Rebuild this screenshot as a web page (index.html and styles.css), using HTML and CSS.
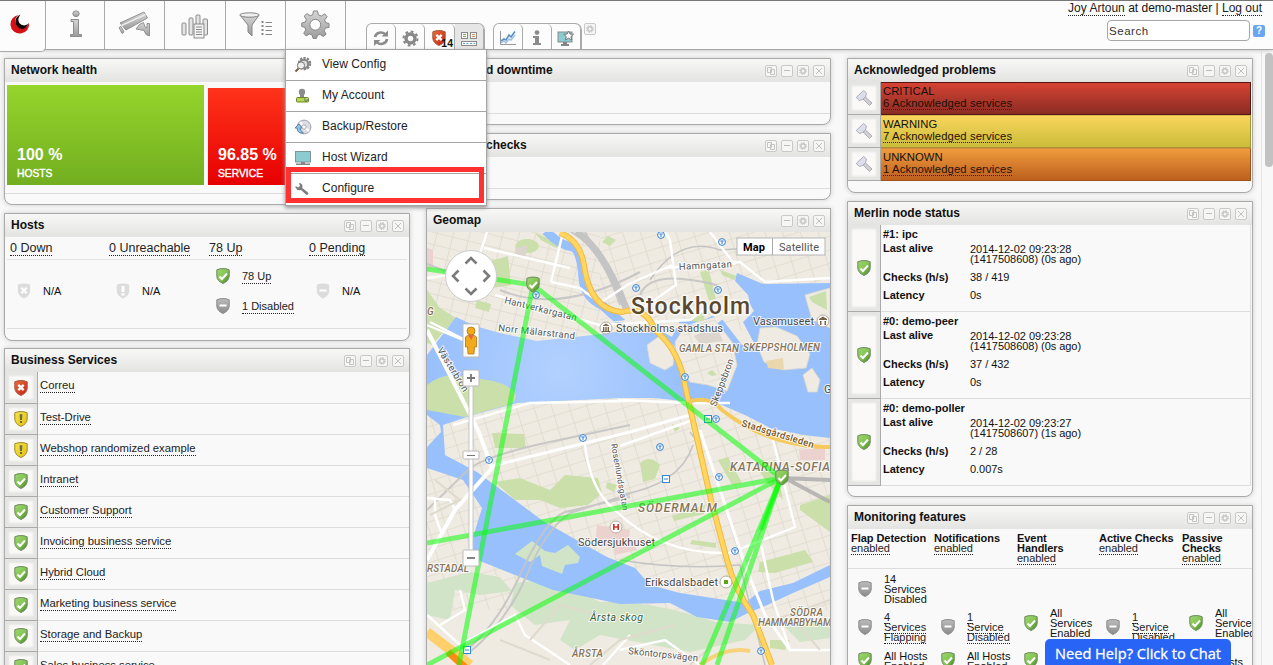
FILE: index.html
```
<!DOCTYPE html>
<html lang="en">
<head>
<meta charset="utf-8">
<title>Tactical overview</title>
<link rel="stylesheet" href="styles.css">
</head>
<body>
<svg class="defs" aria-hidden="true">
  <defs>
    <linearGradient id="gGreen" x1="0" y1="0" x2="1" y2="1"><stop offset="0" stop-color="#9bd670"/><stop offset=".5" stop-color="#86c655"/><stop offset="1" stop-color="#3f7d22"/></linearGradient>
    <linearGradient id="gRed" x1="0" y1="0" x2="1" y2="1"><stop offset="0" stop-color="#e8713d"/><stop offset="1" stop-color="#c81d12"/></linearGradient>
    <linearGradient id="gYellow" x1="0" y1="0" x2="1" y2="1"><stop offset="0" stop-color="#f5e64d"/><stop offset="1" stop-color="#e3bd10"/></linearGradient>
    <linearGradient id="gGrey" x1="0" y1="0" x2="0" y2="1"><stop offset="0" stop-color="#bcbcbc"/><stop offset="1" stop-color="#8a8a8a"/></linearGradient>
    <linearGradient id="gMetal" x1="0" y1="0" x2="0" y2="1"><stop offset="0" stop-color="#d6d6d6"/><stop offset="1" stop-color="#9b9b9b"/></linearGradient>
    <symbol id="check" viewBox="0 0 14 16"><path d="M.8 1.8Q4 .4 7 .6Q10 .4 13.2 1.8V8Q13 13 7 15.5Q1 13 .8 8Z" fill="url(#gGreen)" stroke="#6f8a60"/><path d="M3.5 8.5L6 11L11 5.5" fill="none" stroke="#fff" stroke-width="2"/></symbol>
    <symbol id="crit" viewBox="0 0 14 16"><path d="M.8 1.8Q4 .4 7 .6Q10 .4 13.2 1.8V8Q13 13 7 15.5Q1 13 .8 8Z" fill="url(#gRed)" stroke="#a25a3c"/><path d="M4.3 4.8L9.7 10.2M9.7 4.8L4.3 10.2" stroke="#fff" stroke-width="2.4"/></symbol>
    <symbol id="warn" viewBox="0 0 14 16"><path d="M.8 1.8Q4 .4 7 .6Q10 .4 13.2 1.8V8Q13 13 7 15.5Q1 13 .8 8Z" fill="url(#gYellow)" stroke="#9c8b2c"/><path d="M5.6 3.2H8.4L8 9H6ZM6 10H8V12H6Z" fill="#6f6a4a"/></symbol>
    <symbol id="minus" viewBox="0 0 14 16"><path d="M.8 1.8Q4 .4 7 .6Q10 .4 13.2 1.8V8Q13 13 7 15.5Q1 13 .8 8Z" fill="url(#gGrey)" stroke="#8d8d8d"/><path d="M3.5 7.5H10.5" stroke="#fff" stroke-width="2"/></symbol>
    <symbol id="fx" viewBox="0 0 14 16"><path d="M.8 1.8Q4 .4 7 .6Q10 .4 13.2 1.8V8Q13 13 7 15.5Q1 13 .8 8Z" fill="#dcdcdc"/><path d="M4.3 4.8L9.7 10.2M9.7 4.8L4.3 10.2" stroke="#fff" stroke-width="2.2"/></symbol>
    <symbol id="fw" viewBox="0 0 14 16"><path d="M.8 1.8Q4 .4 7 .6Q10 .4 13.2 1.8V8Q13 13 7 15.5Q1 13 .8 8Z" fill="#dcdcdc"/><path d="M5.5 3H8.5V9H5.5ZM5.5 10.2H8.5V12.4H5.5Z" fill="#fff"/></symbol>
    <symbol id="fm" viewBox="0 0 14 16"><path d="M.8 1.8Q4 .4 7 .6Q10 .4 13.2 1.8V8Q13 13 7 15.5Q1 13 .8 8Z" fill="#dcdcdc"/><path d="M3.5 7.5H10.5" stroke="#fff" stroke-width="2"/></symbol>
    <symbol id="copy" viewBox="0 0 12 12"><rect x=".5" y=".5" width="11" height="11" rx="1.5" fill="#f6f6f5" stroke="#c9c9c9"/><path d="M2.5 2.5H6.5V7.5H2.5ZM5.5 4.5H9.5V9.5H5.5Z" fill="#f6f6f5" stroke="#c4c4c4"/></symbol>
    <symbol id="min" viewBox="0 0 12 12"><rect x=".5" y=".5" width="11" height="11" rx="1.5" fill="#f6f6f5" stroke="#c9c9c9"/><path d="M3 5.5H9" stroke="#bcbcbc"/></symbol>
    <symbol id="cog" viewBox="0 0 12 12"><rect x=".5" y=".5" width="11" height="11" rx="1.5" fill="#f6f6f5" stroke="#c9c9c9"/><circle cx="6" cy="6" r="2.2" fill="none" stroke="#c4c4c4" stroke-width="1.4"/><circle cx="6" cy="6" r="3.5" fill="none" stroke="#c4c4c4" stroke-dasharray="1.3 1.45"/></symbol>
    <symbol id="close" viewBox="0 0 12 12"><rect x=".5" y=".5" width="11" height="11" rx="1.5" fill="#f6f6f5" stroke="#c9c9c9"/><path d="M3 3L9 9M9 3L3 9" stroke="#c0c0c0"/></symbol>
    <symbol id="gear" viewBox="0 0 30 30"><g fill="url(#gMetal)" stroke="#858585"><path d="M13 1H17L18 5L21 6.3L24.6 4L27 7L24.5 10.3L25.5 13L29 14V18L25.2 18.7L24 21.5L26 25L23 27.5L19.7 25.2L17 26.2L16 29.5H12.5L11.5 26L8.7 24.8L5.3 26.8L2.8 24L5 20.6L4 18L.7 17V13.5L4.3 12.5L5.5 9.7L3.3 6.3L6.2 3.7L9.5 6L12 5Z"/><circle cx="14.8" cy="15.3" r="5.6" fill="#fcfcfc"/></g></symbol>
    <symbol id="hammer" viewBox="0 0 18 18"><path d="M8 10L10.500 8L17 14L14.500 16.500Z" fill="#cfcfd4" stroke="#a0a0a8" stroke-width=".8"/><path d="M1.200 8.500L8.500 1.500L11.500 4L10.500 8L7.500 10.500L4.500 11.500Z" fill="#dcdfea" stroke="#a0a0a8" stroke-width=".8"/></symbol>
  </defs>
</svg>

<header class="top">
  <nav class="mainnav">
    <a class="logo"><svg width="20" height="20" viewBox="0 0 20 20"><path d="M9 1A9.3 9.3 0 1 0 19 9A7 7 0 0 1 12 13.5A6.6 6.6 0 0 1 9 1Z" fill="#d51117"/><path d="M10.5.8A7 7 0 0 0 7 12Q13 19.5 19 9A6 6 0 0 1 9.3 9Q7 4.500 10.500.8Z" fill="#120505"/></svg></a>
    <a class="n1"><svg width="14" height="28" viewBox="0 0 14 28"><g fill="url(#gMetal)" stroke="#8b8b8b"><ellipse cx="7" cy="3.700" rx="3.200" ry="2.800"/><path d="M2 9.500H9.500V24.500H12.500V26.500H1.500V24.500H4.500V11.500H2Z"/></g></svg></a>
    <a class="n2"><svg width="34" height="28" viewBox="0 0 34 28"><g fill="url(#gMetal)" stroke="#8b8b8b" stroke-width=".9"><path d="M21.500 14.500L25.500 12.500L27 17L29 18V13.500H31.500V26L28 24.500L26 20.500L18 19Z"/><path d="M2 13L26 2L29.500 8L8 20Z"/><path d="M3.500 15.500L27.500 4.500" stroke="#ececec" stroke-width="1.400"/><path d="M1 17.500L3 16.500L6 22L4 23.500Z"/></g></svg></a>
    <a class="n3"><svg width="28" height="26" viewBox="0 0 28 26"><g fill="#e4e4e4" stroke="#8b8b8b"><rect x="1" y="10" width="4" height="12" rx="1"/><rect x="8" y="5" width="4" height="17" rx="1"/><rect x="15" y="2" width="4" height="20" rx="1"/><rect x="22" y="6" width="4.500" height="16" rx="1"/><rect x="13" y="11" width="10" height="14" fill="#f2f2f2"/><path d="M15 14H21M15 16.500H21M15 19H21M15 21.500H21"/></g></svg></a>
    <a class="n4"><svg width="34" height="26" viewBox="0 0 34 26"><path d="M1 3Q11 7 20 3L13 13V24L9 20V13Z" fill="url(#gMetal)" stroke="#858585"/><ellipse cx="10.500" cy="3" rx="9.700" ry="2.200" fill="#eee" stroke="#858585"/><g stroke="#888"><path d="M26.500 10.500H33M26.500 14.500H33M26.500 18.500H33M26.500 22.500H33"/><path d="M23.500 9V24" stroke-dasharray="2 2" stroke-width="2"/></g></svg></a>
    <a class="n5"><svg width="29" height="29"><use href="#gear"/></svg></a>
  </nav>
  <div class="tabs">
    <a><svg width="18" height="18" viewBox="0 0 18 18"><g fill="none" stroke="#8c8c8c" stroke-width="2.600"><path d="M3 8A6 5.500 0 0 1 13 5"/><path d="M15 10A6 5.500 0 0 1 5 13.500"/></g><path d="M9.500 7.500H16V1.500ZM8.500 11H2V17Z" fill="#8c8c8c"/></svg></a>
    <a><svg width="17" height="17" viewBox="0 0 18 18"><circle cx="9" cy="9" r="4.700" fill="none" stroke="#888" stroke-width="3.600"/><circle cx="9" cy="9" r="7.400" fill="none" stroke="#888" stroke-width="2.200" stroke-dasharray="2.900 2.910"/></svg></a>
    <a class="alerts"><svg width="14" height="16"><use href="#crit"/></svg><b>14</b></a>
    <a class="sel"><svg width="17" height="17" viewBox="0 0 17 17"><g fill="#f8f8f8" stroke="#8a8a8a"><rect x=".5" y="2.500" width="6" height="6"/><rect x="9.500" y="2.500" width="6" height="6"/><rect x=".5" y="11.500" width="15" height="4"/></g><path d="M2 4.500H5M2 6.500H5" stroke="#83a957"/><path d="M11 4.500H14M11 6.500H14" stroke="#c9954d"/><path d="M2 13.500H14" stroke="#68a3c4" stroke-dasharray="2 1.500"/></svg></a>
  </div>
  <div class="tabs second">
    <a><svg width="18" height="16" viewBox="0 0 18 16"><path d="M1.500 1V14.500H17" fill="none" stroke="#999"/><path d="M2 11L5 9L7 10L10 5L12 7L16 1.500" fill="none" stroke="#5a8fc4" stroke-width="1.600"/><path d="M2 13L5 11L7 13L10 9L12 10L16 5" fill="none" stroke="#9cc1e4" stroke-width="1.400"/></svg></a>
    <a><svg width="10" height="16" viewBox="0 0 10 16"><circle cx="5" cy="2.600" r="2.400" fill="#8b8b8b"/><path d="M1 6H7V13H9V15H1V13H3V8H1Z" fill="#8b8b8b"/></svg></a>
    <a><svg width="18" height="17" viewBox="0 0 18 17"><rect x="1" y="2" width="14" height="10" fill="#8ccdd2" stroke="#8b8b8b"/><path d="M6 12H10V14H12V16H4V14H6Z" fill="#858585"/><path d="M11.500 1L13 4L16.500 4.300L14 6.500L14.700 10L11.500 8.200L8.500 10L9.200 6.500L6.700 4.300L10.200 4Z" fill="#fafafa" stroke="#777"/></svg></a>
  </div>
  <svg class="tabcog" width="12" height="12"><use href="#cog"/></svg>
  <div class="user">
    <p><a class="lnk">Joy Artoun</a> at demo-master | <a class="lnk">Log out</a></p>
    <div class="searchrow"><span class="search">Search</span><span class="help">?</span></div>
  </div>
  <div class="menu">
    <a><svg width="18" height="16" viewBox="0 0 18 16"><circle cx="10.500" cy="6.500" r="5.500" fill="none" stroke="#858585" stroke-width="2.400" stroke-dasharray="2.300 1.150"/><circle cx="10" cy="7" r="4.200" fill="#ddd" stroke="#858585" stroke-width="2"/><circle cx="7" cy="8.500" r="3.600" fill="#eee" stroke="#777"/><path d="M4.500 11.500L1.500 14.500" stroke="#8a5843" stroke-width="2"/></svg>View Config</a>
    <a><svg width="16" height="16" viewBox="0 0 16 16"><circle cx="8" cy="4" r="3.200" fill="#8c8c8c"/><path d="M6 6H10V9H6ZM3 9H13V12H3Z" fill="#8c8c8c"/><rect x="2.500" y="9.500" width="12" height="4.500" rx="1" fill="#b5d84f" stroke="#6d8433"/><path d="M11 10V13H13V11" fill="#fff" stroke="#54703a"/></svg>My Account</a>
    <a><svg width="18" height="16" viewBox="0 0 18 16"><circle cx="10" cy="8" r="6.900" fill="#dcdce8" stroke="#a2a2ab"/><path d="M10 8L6 3M10 8L15 12" stroke="#fff" stroke-width="2"/><circle cx="10" cy="8" r="2.200" fill="#fff" stroke="#aaa"/><path d="M1 9L5 5L8 9H6Q6 12 9.500 14Q3 14.500 3.200 9Z" fill="#8fc5e8" stroke="#5787aa"/></svg>Backup/Restore</a>
    <a><svg width="18" height="16" viewBox="0 0 18 16"><rect x="1.500" y="1.500" width="15" height="10.500" fill="#8ccbd0" stroke="#7d9898"/><path d="M7 12H11V13.500H16V15H2V13.500H7Z" fill="#858585"/></svg>Host Wizard</a>
    <a><svg width="16" height="16" viewBox="0 0 16 16"><path d="M5 2Q8 2 8.500 5L8.300 7L14 11.500Q15 13.500 12.500 14L7 9Q3 10 1.500 6.500V5L4 6.500L6 5Z" fill="#7d7d7d"/></svg>Configure</a>
    <span class="frame"></span>
  </div>
</header>

<main class="board">
  <div class="col">
    <section class="w health">
      <h2>Network health</h2>
      <div class="tiles"><div class="tile ok"><b>100 %</b><span>HOSTS</span></div><div class="tile bad"><b>96.85 %</b><span>SERVICE</span></div></div>
    </section>
    <section class="w hosts">
      <h2>Hosts<i><svg><use href="#copy"/></svg><svg><use href="#min"/></svg><svg><use href="#cog"/></svg><svg><use href="#close"/></svg></i></h2>
      <div class="hh"><span><a class="lnk">0 Down</a></span><span><a class="lnk">0 Unreachable</a></span><span><a class="lnk">78 Up</a></span><span><a class="lnk">0 Pending</a></span></div>
      <div class="hb">
        <div><p><svg class="sh"><use href="#fx"/></svg>N/A</p></div>
        <div><p><svg class="sh"><use href="#fw"/></svg>N/A</p></div>
        <div><p><svg class="sh"><use href="#check"/></svg><a class="lnk">78 Up</a></p><p><svg class="sh"><use href="#minus"/></svg><a class="lnk">1 Disabled</a></p></div>
        <div><p><svg class="sh"><use href="#fm"/></svg>N/A</p></div>
      </div>
    </section>
    <section class="w biz">
      <h2>Business Services<i><svg><use href="#copy"/></svg><svg><use href="#min"/></svg><svg><use href="#cog"/></svg><svg><use href="#close"/></svg></i></h2>
      <div class="rows">
        <div><em><svg class="sh"><use href="#crit"/></svg></em><a class="lnk">Correu</a></div>
        <div><em><svg class="sh"><use href="#warn"/></svg></em><a class="lnk">Test-Drive</a></div>
        <div><em><svg class="sh"><use href="#warn"/></svg></em><a class="lnk">Webshop randomized example</a></div>
        <div><em><svg class="sh"><use href="#check"/></svg></em><a class="lnk">Intranet</a></div>
        <div><em><svg class="sh"><use href="#check"/></svg></em><a class="lnk">Customer Support</a></div>
        <div><em><svg class="sh"><use href="#check"/></svg></em><a class="lnk">Invoicing business service</a></div>
        <div><em><svg class="sh"><use href="#check"/></svg></em><a class="lnk">Hybrid Cloud</a></div>
        <div><em><svg class="sh"><use href="#check"/></svg></em><a class="lnk">Marketing business service</a></div>
        <div><em><svg class="sh"><use href="#check"/></svg></em><a class="lnk">Storage and Backup</a></div>
        <div><em><svg class="sh"><use href="#check"/></svg></em><a class="lnk">Sales business service</a></div>
      </div>
    </section>
  </div>

  <div class="col">
    <section class="w small one"><h2><span>d downtime</span><i><svg><use href="#copy"/></svg><svg><use href="#min"/></svg><svg><use href="#cog"/></svg><svg><use href="#close"/></svg></i></h2><div class="blank"></div></section>
    <section class="w small two"><h2><span>checks</span><i><svg><use href="#copy"/></svg><svg><use href="#min"/></svg><svg><use href="#cog"/></svg><svg><use href="#close"/></svg></i></h2><div class="blank"></div></section>
    <section class="w geo">
      <h2>Geomap<i><svg><use href="#min"/></svg><svg><use href="#cog"/></svg><svg><use href="#close"/></svg></i></h2>
      <svg class="map" width="403" height="433" viewBox="427 232 403 433">
        <defs>
          <pattern id="st" width="17" height="13" patternUnits="userSpaceOnUse" patternTransform="rotate(-17)"><path d="M0 0H17M0 0V13" fill="none" stroke="#dfdacd" stroke-width="1.600"/></pattern>
          <pattern id="st2" width="16" height="12" patternUnits="userSpaceOnUse" patternTransform="rotate(14)"><path d="M0 0H16M0 0V12" fill="none" stroke="#dfdacd" stroke-width="1.600"/></pattern>
          <radialGradient id="sea" gradientUnits="userSpaceOnUse" cx="560" cy="370" r="130"><stop offset="0" stop-color="#b3d1ff"/><stop offset="1" stop-color="#98c0fd"/></radialGradient>
          <symbol id="tb" viewBox="0 0 8 8"><circle cx="4" cy="4" r="3.400" fill="#fff" stroke="#2f7fd0"/><path d="M2.300 3H5.700M4 3V6" stroke="#2f7fd0"/></symbol>
        </defs>
        <rect x="427" y="232" width="403" height="433" fill="#efebe2"/>
        <path d="M427 232H600V345H427Z" fill="url(#st2)"/>
        <path d="M600 232H830V330H600ZM427 398H830V610H427Z" fill="url(#st)"/>
        <g fill="#cadfaa">
          <path d="M427 290L440 308L456 318L432 345L427 343ZM487 262L508 256L511 285L492 288ZM515 247q2-9 14-8q12 2 9 10q-10 9-23-2ZM477 300L491 304L489 312L475 308ZM535 233L562 244L556 248L541 240ZM608 236L616 240L610 246L602 242ZM700 272L709 270L716 300L710 304ZM720 270L737 276L734 280L722 275ZM690 318L703 311L705 321L692 325Z"/>
          <path d="M492 433L524 434L526 448L495 448ZM495 482L520 478L550 490L565 475L598 478L602 493L588 505L560 508L540 500L515 500ZM607 482L617 485L614 492L606 488ZM548 314l-8 36M640 463q10-9 20 2l-5 14l-12 3ZM672 516L705 505L704 514L674 521ZM692 540L716 543L716 548L690 544ZM718 460L728 457L742 483L732 485ZM756 465L775 460L783 500L765 480ZM800 505L830 495V532L800 510ZM760 562L805 550L813 562L775 573L758 572ZM672 424L680 428L675 432ZM770 640L790 640L785 650L770 648Z"/>
          <path d="M516 583Q550 575 600 602Q650 600 715 622L760 625L745 640L690 652L600 635L575 650L560 640L570 620L535 625L510 605ZM427 583L470 572L500 577L512 591L480 595L455 590L450 620L427 615ZM785 627L830 620V638L800 642Z" fill="#d1e4c7"/>
        </g>
        <path d="M516 248l12-3l-3 13l-10-1Z" fill="#dbd5ce"/>
        <path d="M427 248L433 250V267L427 269ZM597 525L630 530L628 548L595 545ZM610 530L630 540L637 550L615 555ZM799 450L825 447V460H800Z" fill="#ebd2cf"/>
        <g fill="url(#sea)">
          <path d="M456 317L475 326L500 333L537 341L575 337L610 333L650 325L672 337L680 320L700 322L712 316L722 319L742 345L755 345L743 322L752 313L748 295L735 281L737 273L763 284L830 283V438L803 435L770 428L747 416L722 405L690 402L655 398L620 398L580 400L517 403L473 415L443 425L445 455L477 472L500 489L543 521L580 542L607 557L635 568L650 585L680 593L745 603L760 591L793 583L830 565V577L793 593L763 607L750 612L730 622L697 617L670 603L620 604L587 597L553 590L520 577L480 561L470 547L482 508L463 480L427 468V447L441 432L440 425L427 415V355Z"/>
        </g>
        <path d="M546 231Q560 246 573 247Q581 250 583 278Q584 297 603 306L622 323" fill="none" stroke="#98c0fd" stroke-width="9"/>
        <path d="M606 322L650 318L670 330L715 317L702 301L745 296L754 311L743 321L733 312L712 327L678 323Z" fill="#efebe2"/>
        <g fill="#efebe2" stroke="#ddd8ca" stroke-width=".8">
          <path d="M684 328L715 320L732 342L737 365L727 391L708 385L690 382L677 361L675 342Z"/><path d="M647 345L661 335L675 347L673 365L665 370L650 363Z"/><path d="M760 328L776 327L797 336L810 354L806 368L783 370L764 362L757 345Z"/><path d="M805 295L830 288V328L812 320Z"/><path d="M803 375L812 368L820 380L817 392L808 392Z"/>
        </g>
        <path d="M685 331L729 344L734 365L722 385L692 379L678 358Z" fill="url(#st)"/>
        <path d="M694 336L716 325L723 341L700 344Z" fill="#dbd5ce"/>
        <path d="M766 361L783 358L784 370L768 368Z" fill="#ead7ae"/>
        <path d="M809 297L826 291L827 310L812 302ZM707 373l5-3l5 5l-5 1Z" fill="#cadfaa"/>
        <path d="M427 385Q445 370 470 378Q505 380 515 393Q520 403 500 407L465 417L427 410Z" fill="#cadfaa"/>
        <path d="M515 554L532 541L545 551L555 553L568 545L580 557L578 563L565 565L562 574L542 566L540 555L530 562Z" fill="#d1e4c7"/>
        <!-- railways -->
        <g fill="none" stroke="#c4c4c4" stroke-width="2"><path d="M427 264Q455 275 475 281M500 290Q560 315 640 272M571 232Q600 245 620 305M585 232L630 310M640 295Q650 268 717 285M427 510L470 468Q490 455 545 443L630 425M460 655Q495 630 520 575Q545 520 565 512L630 497M466 655Q505 625 527 575Q545 530 570 513L630 494" opacity=".9"/><path d="M576 232Q603 248 626 308" stroke-width="7"/><path d="M650 280Q680 235 720 250L750 248M620 495Q680 485 693 445M620 560Q680 570 740 565L765 665M690 432L700 445" stroke-width="1.500"/><path d="M781 478L830 480M781 476L830 502" stroke="#aaa" stroke-width="4" opacity=".8"/></g>
        <!-- minor streets -->
        <g fill="none" stroke="#fff" stroke-width="2.400">
          <path d="M427 278L450 275M487 232L478 260M495 295L600 325L690 320M484 248L570 268M551 282L580 288L600 303L627 285L672 265M563 232L551 282M427 325L475 345L430 322M640 310L676 285L670 240L665 232M665 268L740 262L765 282L830 278M710 232L735 265M690 320L710 305"/>
          <path d="M427 330L478 430L492 468L455 510L427 560" stroke-width="4"/><path d="M492 466L630 432L690 415" stroke-width="3"/><path d="M585 445Q590 490 615 510Q660 555 730 553L795 527L773 440"/><path d="M427 498L450 500L455 510M435 500L435 515L442 535M460 590L465 610L440 625M427 615L460 645L515 615L525 635L570 665M603 665L630 635M760 540L773 600L790 650H830M620 650L665 640L700 665"/>
          <path d="M700 430L745 565L765 615L790 650" stroke-width="3"/><path d="M618 400L690 403L730 403M453 425L530 403L625 401M620 446L690 421"/>
        </g>
        <g fill="none" stroke="#dfdacd" stroke-width="2"><path d="M530 640L560 605L620 620M590 665L620 640L675 625M690 665L730 630M500 640L550 660M760 625L830 600M790 615L820 650M435 480L460 500L430 515"/></g>
        <!-- motorways -->
        <path d="M560 233Q580 240 584 265Q590 310 622 312Q645 305 655 330Q680 350 686 390L694 425L711 500L727 560Q735 590 753 615L772 665" fill="none" stroke="#f3b73f" stroke-width="6"/>
        <path d="M560 233Q580 240 584 265Q590 310 622 312Q645 305 655 330Q680 350 686 390L694 425L711 500L727 560Q735 590 753 615L772 665" fill="none" stroke="#ffd65f" stroke-width="4"/>
        <path d="M688 402Q710 395 722 410Q750 432 780 440T830 447" fill="none" stroke="#f5c95b" stroke-width="4"/>
        <path d="M427 632L470 665" stroke="#ffcf6c" stroke-width="10"/><path d="M448 652L468 670" stroke="#ff8b12" stroke-width="7"/>
        <path d="M700 665Q725 646 750 651" fill="none" stroke="#f9d27d" stroke-width="4"/>
        <!-- place labels -->
        <g class="lb">
          <text x="679" y="270" textLength="53" transform="rotate(-3 679 270)">Hamngatan</text>
          <text x="504" y="303" textLength="74" transform="rotate(14 504 303)">Hantverkargatan</text>
          <text x="498" y="331" textLength="77" transform="rotate(6 498 331)">Norr Mälarstrand</text>
          <text x="437" y="350" textLength="50" transform="rotate(58 437 350)">Västerbron</text>
          <text x="716" y="407" textLength="50" transform="rotate(-69 716 407)">Skeppsbron</text>
          <text x="611" y="444" textLength="68" transform="rotate(80 611 444)" class="sm">Rosenlundsgatan</text>
          <text x="741" y="426" textLength="75" transform="rotate(17 741 426)" class="br">Stadsgårdsleden</text>
          <text x="628" y="654" textLength="70" transform="rotate(6 628 654)">Sköntorpsvägen</text>
          <text x="616" y="332" textLength="107" class="poi">Stockholms stadshus</text>
          <text x="753" y="325" textLength="61" class="poi">Vasamuseet</text>
          <text x="578" y="546" textLength="77" class="poi">Södersjukhuset</text>
          <text x="645" y="586" textLength="73" class="poi">Eriksdalsbadet</text>
          <text x="824" y="393" class="poi">G</text>
          <text x="631" y="314" textLength="119" class="city">Stockholm</text>
          <g class="area"><text x="679" y="352" textLength="60">GAMLA STAN</text><text x="743" y="351" textLength="77">SKEPPSHOLMEN</text><text x="730" y="471" textLength="100" class="big">KATARINA-SOFIA</text><text x="638" y="512" textLength="79" class="big">SÖDERMALM</text><text x="427" y="572" textLength="42">RSTADAL</text><text x="572" y="657" textLength="31">ÅRSTA</text><text x="790" y="616" textLength="33">SÖDRA</text><text x="758" y="626" textLength="80">HAMMARBYHAMN</text><text x="427" y="315">G</text></g>
          <text x="590" y="621" textLength="53" class="park">Årsta skog</text>
        </g>
        <g><use href="#tb" x="657" y="231" width="8" height="8"/><use href="#tb" x="718" y="238" width="8" height="8"/><use href="#tb" x="632" y="284" width="8" height="8"/><use href="#tb" x="714" y="286" width="8" height="8"/><use href="#tb" x="532" y="291" width="8" height="8"/><use href="#tb" x="681" y="373" width="8" height="8"/><use href="#tb" x="712" y="415" width="8" height="8"/><use href="#tb" x="485" y="456" width="8" height="8"/><use href="#tb" x="579" y="434" width="8" height="8"/><use href="#tb" x="656" y="443" width="8" height="8"/><use href="#tb" x="715" y="473" width="8" height="8"/><use href="#tb" x="731" y="547" width="8" height="8"/><use href="#tb" x="757" y="647" width="8" height="8"/></g>
        <g fill="#fff" stroke="#3487d2"><rect x="704.500" y="415.500" width="7" height="7"/><rect x="662.500" y="475.500" width="7" height="7"/><rect x="463.500" y="646.500" width="7" height="7"/><path d="M706 419H710M664 479H668M465 650H469"/></g>
        <g fill="#fff" stroke="#b4aca0"><circle cx="606" cy="328" r="6"/><circle cx="823" cy="321" r="6"/><circle cx="616" cy="527" r="6"/><circle cx="726" cy="582" r="6"/></g>
        <path d="M602.500 326L606 323.500L609.500 326ZM603 327h1.400v4h-1.400ZM605.300 327h1.400v4h-1.400ZM607.600 327h1.400v4h-1.400ZM602 331h8v1h-8ZM819 319L823 316.500L827 319V320H819ZM820 321h1.500v4h-1.500ZM824.500 321h1.500v4h-1.500Z" fill="#77624a"/>
        <path d="M613.800 524V530M618.200 524V530M614 527H618" stroke="#d3332d" stroke-width="1.700"/><rect x="724" y="580" width="4" height="4" fill="#5ba51b"/>
        <!-- node connections -->
        <g fill="none" stroke="#00ff00" stroke-opacity=".52" stroke-width="5"><path d="M427 269L533 285L781 478L427 543"/><path d="M533 285L459 665"/><path d="M781 478L427 665"/><path d="M781 478L702 665"/><path d="M781 478L717 665"/><path d="M781 478L761 530"/></g>
        <use href="#check" x="526" y="276" width="14" height="17"/><use href="#check" x="775" y="469" width="14" height="17"/>
        <!-- map controls -->
        <g class="ctl"><circle cx="471" cy="276" r="25.500" fill="#fff" stroke="#ccc"/><path d="M465.500 263.500L471 258L476.500 263.500M465.500 288.500L471 294L476.500 288.500M458.500 270.500L453 276L458.500 281.500M483.500 270.500L489 276L483.500 281.500" fill="none" stroke="#7b7b7b" stroke-width="2.600"/>
        <rect x="469" y="385" width="4" height="166" fill="#fff" stroke="#bbb" stroke-width=".8"/>
        <rect x="463" y="324" width="16" height="33" rx="1" fill="#fff" stroke="#bbb"/><g fill="#f2a91c" stroke="#b57410" stroke-width=".8"><path d="M465.500 337Q471 332 476.500 337V347H474.500L474 354H468L467.500 347H465.500Z"/><circle cx="471" cy="331" r="4"/></g><path d="M468 335H474L471 340Z" fill="#e26b3e"/>
        <rect x="463" y="370" width="16" height="16" rx="1" fill="#fff" stroke="#bbb"/><path d="M467 378H475M471 374V382" stroke="#777" stroke-width="1.800"/>
        <rect x="463" y="451" width="16" height="8" rx="1" fill="#fff" stroke="#bbb"/><path d="M467 455.500H475" stroke="#777"/>
        <rect x="463" y="550" width="16" height="16" rx="1" fill="#fff" stroke="#bbb"/><path d="M467 558H475" stroke="#777" stroke-width="1.800"/></g>
        <rect x="737" y="238" width="88" height="17" fill="#fff" stroke="#b5b5b5"/><path d="M772.500 238V255" stroke="#aaa"/>
        <g class="mt"><text x="743" y="251" textLength="22" class="on">Map</text><text x="779" y="251" textLength="40">Satellite</text></g>
      </svg>
    </section>
  </div>

  <div class="col">
    <section class="w ack">
      <h2>Acknowledged problems<i><svg><use href="#copy"/></svg><svg><use href="#min"/></svg><svg><use href="#cog"/></svg><svg><use href="#close"/></svg></i></h2>
      <div class="arow"><em><svg width="18" height="18"><use href="#hammer"/></svg></em><div class="c">CRITICAL<br><a class="lnk">6 Acknowledged services</a></div></div>
      <div class="arow"><em><svg width="18" height="18"><use href="#hammer"/></svg></em><div class="wn">WARNING<br><a class="lnk">7 Acknowledged services</a></div></div>
      <div class="arow"><em><svg width="18" height="18"><use href="#hammer"/></svg></em><div class="u">UNKNOWN<br><a class="lnk">1 Acknowledged services</a></div></div>
    </section>
    <section class="w merlin">
      <h2>Merlin node status<i><svg><use href="#copy"/></svg><svg><use href="#min"/></svg><svg><use href="#cog"/></svg><svg><use href="#close"/></svg></i></h2>
      <div class="node"><em><svg class="sh"><use href="#check"/></svg></em><dl><dt class="t">#1: ipc</dt><dt>Last alive</dt><dd>2014-12-02 09:23:28<br>(1417508608) (0s ago)</dd><dt>Checks (h/s)</dt><dd>38 / 419</dd><dt>Latency</dt><dd>0s</dd></dl></div>
      <div class="node"><em><svg class="sh"><use href="#check"/></svg></em><dl><dt class="t">#0: demo-peer</dt><dt>Last alive</dt><dd>2014-12-02 09:23:28<br>(1417508608) (0s ago)</dd><dt>Checks (h/s)</dt><dd>37 / 432</dd><dt>Latency</dt><dd>0s</dd></dl></div>
      <div class="node"><em><svg class="sh"><use href="#check"/></svg></em><dl><dt class="t">#0: demo-poller</dt><dt>Last alive</dt><dd>2014-12-02 09:23:27<br>(1417508607) (1s ago)</dd><dt>Checks (h/s)</dt><dd>2 / 28</dd><dt>Latency</dt><dd>0.007s</dd></dl></div>
    </section>
    <section class="w mon">
      <h2>Monitoring features<i><svg><use href="#copy"/></svg><svg><use href="#min"/></svg><svg><use href="#cog"/></svg><svg><use href="#close"/></svg></i></h2>
      <div class="g gh"><div><b>Flap Detection</b><br><a class="lnk">enabled</a></div><div><b>Notifications</b><br><a class="lnk">enabled</a></div><div><b>Event<br>Handlers</b><br><a class="lnk">enabled</a></div><div><b>Active Checks</b><br><a class="lnk">enabled</a></div><div><b>Passive<br>Checks</b><br><a class="lnk">enabled</a></div></div>
      <div class="g g1"><div><svg class="sh"><use href="#minus"/></svg><span>14<br>Services<br>Disabled</span></div></div>
      <div class="g g2">
        <div><svg class="sh"><use href="#minus"/></svg><span><a class="lnk">4<br>Services<br>Flapping</a></span></div>
        <div><svg class="sh"><use href="#minus"/></svg><span><a class="lnk">1<br>Service<br>Disabled</a></span></div>
        <div class="up"><svg class="sh"><use href="#check"/></svg><span>All<br>Services<br>Enabled</span></div>
        <div><svg class="sh"><use href="#minus"/></svg><span><a class="lnk">1<br>Service<br>Disabled</a></span></div>
        <div class="up"><svg class="sh"><use href="#check"/></svg><span>All<br>Services<br>Enabled</span></div>
      </div>
      <div class="g g3">
        <div><svg class="sh"><use href="#check"/></svg><span>All Hosts<br>Enabled</span></div>
        <div><svg class="sh"><use href="#check"/></svg><span>All Hosts<br>Enabled</span></div>
        <div><svg class="sh"><use href="#check"/></svg></div>
        <div></div>
        <div class="up"><svg></svg><span><br>Hosts</span></div>
      </div>
    </section>
  </div>
  <div class="scroll"><span></span></div>
</main>
<a class="chat">Need Help? Click to Chat</a>
</body>
</html>
```
FILE: styles.css
```
* { box-sizing: border-box; margin: 0; padding: 0; }
body { width: 1273px; height: 665px; overflow: hidden; background: #f8f8f8; font: 12px/14px "Liberation Sans", Arial, sans-serif; color: #111; display: flex; flex-direction: column; }
svg { display: block; flex: none; }
.defs { position: absolute; width: 0; height: 0; }
.lnk { color: #222; border-bottom: 1px dotted #222; }

/* Header */
.top { position: relative; z-index: 5; flex: none; height: 50px; display: flex; background: #fcfcfc; border-top: 1px solid #777; border-bottom: 1px solid #a5a5a5; box-shadow: 0 1px 4px #ccc; }
.mainnav { display: flex; }
.mainnav a { height: 48px; display: flex; align-items: center; justify-content: center; border-right: 1px solid #aaa; }
.mainnav .logo { width: 46px; height: 51px; padding: 0 6px 4px 0; background: #fcfcfc; border-bottom: 1px solid #aaa; border-radius: 0 0 5px 0; }
.n1 { width: 59px; padding: 0 0 2px 2px; }
.n2 { width: 60px; padding-bottom: 3px; }
.n3 { width: 61px; padding-top: 2px; }
.n4 { width: 60px; }
.n5 { width: 60px; padding-bottom: 2px; }
.tabs { display: flex; align-self: flex-start; height: 26px; margin: 22px 0 0 20px; border: solid #aaa; border-width: 1px 1px 0 1px; border-radius: 6px 7px 0 0; overflow: hidden; }
.tabs a { width: 29px; display: flex; align-items: center; justify-content: center; border-right: 1px solid #aaa; border-radius: 0 5px 0 0; padding-top: 3px; }
.tabs .sel { background: #e6e6e6; }
.tabs .alerts { width: 30px; justify-content: flex-start; padding-left: 7px; position: relative; }
.alerts b { position: absolute; right: 1px; bottom: 0; font-size: 10.500px; line-height: 11px; }
.tabs.second { margin-left: 8px; }
.tabcog { margin: 22px 0 0 2px; }
.user { margin-left: auto; padding-right: 8px; text-align: right; }
.user p { padding: 1px 3px 0 0; height: 19px; line-height: 13px; }
.searchrow { display: flex; align-items: center; justify-content: flex-end; gap: 3px; }
.search { width: 143px; height: 21px; border: 1px solid #a6a6a6; border-radius: 4px; background: #fff; text-align: left; padding: 3px 1px; font-size: 11.500px; letter-spacing: .55px; color: #333; }
.help { width: 12px; height: 12px; border-radius: 2px; background: #69a5f2; color: #fff; font: bold 10px/12px "Liberation Sans", Arial, sans-serif; text-align: center; }
.menu { position: absolute; left: 285px; top: 48px; width: 202px; border: 1px solid #a5a5a5; background: #fff; box-shadow: 0 2px 4px #999; }
.menu a { display: flex; align-items: center; height: 31px; padding: 0 0 3px 8px; border-bottom: 1px solid #a5a5a5; color: #222; letter-spacing: .03px; }
.menu a:last-of-type { border-bottom: 0; }
.menu a svg { margin-right: 10px; position: relative; top: 1px; }
.menu a svg[width="16"] { margin-right: 12px; }
.frame { position: absolute; left: 0; top: 117px; width: 198px; height: 36px; border: 5px solid #ff3131; }

/* Dashboard */
.board { flex: 1; min-height: 0; display: flex; padding: 8px 0 0 4px; overflow: hidden; }
.col { flex: none; width: 406px; margin-right: 16px; display: flex; flex-direction: column; }
.col:nth-child(2) { width: 405px; }
.col:nth-child(3) { margin-right: 8px; }
.w { flex: none; border: 1px solid #a9a9a9; border-radius: 0 0 8px 8px; background: #f9f9f9; box-shadow: 0 0 5px #ccc; overflow: hidden; }
.w h2 { height: 23px; display: flex; align-items: center; justify-content: space-between; padding: 0 5px 2px 6px; font-size: 12px; color: #111; background: linear-gradient(#f8f8f7, #e3e3e1); }
.w h2 i { display: flex; gap: 4px; padding-top: 3px; }
.w h2 i svg { width: 12px; height: 12px; }
.sh { width: 14px; height: 16px; }
.health { height: 147px; margin-bottom: 8px; }
.tiles { display: flex; align-items: flex-end; gap: 4px; padding: 3px 2px 8px; border-bottom: 1px solid #ddd; height: 112px; }
.tile { display: flex; flex-direction: column; justify-content: flex-end; width: 197px; padding: 0 0 4px 10px; color: #fff; font-size: 10.300px; }
.tile b { font-size: 16px; line-height: 18px; margin-bottom: 3px; }
.tile span { -webkit-text-stroke: .4px #fff; }
.ok { height: 100px; background: linear-gradient(#95d52c, #72ae20); }
.bad { height: 97px; background: linear-gradient(#ff331b, #e60000); }
.hosts { height: 128px; margin-bottom: 7px; }
.hh { display: flex; font-size: 12.500px; height: 23px; line-height: 22px; margin: 0 2px; padding-left: 3px; border-bottom: 1px solid #e4e4e4; }
.hh span, .hb div { flex: none; width: 100px; }
.hh span:first-child { width: 99px; }
.hb div:first-child { width: 99px; }
.hb { display: flex; height: 69px; margin: 0 2px; padding-left: 10px; border-bottom: 1px solid #ddd; align-items: center; font-size: 11px; padding-bottom: 6px; }
.hb p { display: flex; align-items: center; gap: 12px; height: 30px; }
.biz { flex: 1 0 auto; }
.rows div { display: flex; height: 31px; border-bottom: 1px solid #ddd; }
.rows div:first-child { height: 32px; }
.rows a { align-self: flex-start; font-size: 11.300px; line-height: 14px; margin: 6px 0 0 2px; }
em { flex: none; width: 33px; display: flex; align-items: center; justify-content: center; background: #faf9f8; border: solid #aaa; border-width: 0 1px 0 0; box-shadow: inset 0 0 2px 4px #e5e5e3; }
.rows em { margin-bottom: -1px; border-bottom: 1px solid #aaa; padding-right: 1px; }
.small { height: 67px; margin-bottom: 8px; }
.small h2 span { padding-left: 53px; }
.blank { height: 32px; border-bottom: 1px solid #ddd; }
.geo { border-radius: 0; }
.lb text { font: 9.500px Roboto, sans-serif; fill: #555; stroke: #fff; stroke-width: 2px; stroke-opacity: .8; paint-order: stroke; }
.lb .sm { font-size: 8.500px; }
.lb .br { fill: #7c561a; font-weight: 500; }
.lb .poi { font-size: 11px; fill: #484848; }
.lb .city { font-size: 23px; fill: #59482d; font-weight: 500; stroke-width: 3px; }
.lb .area text { font-size: 10px; font-style: italic; font-weight: 500; fill: #85745a; }
.lb .area .big { font-size: 12px; }
.lb .park { font-size: 10.500px; font-style: italic; fill: #31613b; }
.mt text { font: 11px Roboto, sans-serif; fill: #555; }
.mt .on { font-weight: 700; fill: #000; }
.ack { height: 135px; margin-bottom: 8px; }
.arow { display: flex; height: 33px; padding-right: 1px; }
.arow em, .node em { border-bottom: 1px solid #aaa; }
.arow div { flex: 1; border: 1px solid; border-left: 0; padding: 2px 0 0 2px; font-size: 11.300px; line-height: 12px; }
.c { background: linear-gradient(#d64333, #8b2c24); border-color: #561512 !important; }
.wn { background: linear-gradient(#fad45d, #cabd39); border-color: #d4b948 #a49432 #b18d31 !important; }
.u { background: linear-gradient(#f09b3e, #bc601d); border-color: #d08d3d #a44e18 #a44e18 !important; }
.arow a { letter-spacing: .1px; color: #1d1005; padding-bottom: 0; }
.merlin { height: 296px; margin-bottom: 8px; }
.node { display: flex; height: 87px; border-bottom: 1px solid #ddd; margin-right: 1px; border-right: 1px solid #ddd; }
.node em { margin-bottom: -1px; }
.node dl { display: grid; grid-template-columns: 87px auto; grid-template-rows: 14px 29px 18px 18px; font-size: 11px; line-height: 11px; padding: 4px 0 0 2px; }
.node dt { font-weight: bold; }
.node .t { grid-column: 1 / 3; }
.node dd { letter-spacing: -.04px; }
.node .t + dt + dd { line-height: 10px; padding-top: 1px; }
.mon { flex: 1 0 auto; font-size: 11px; line-height: 10px; }
.g { display: grid; grid-template-columns: 83px 83px 82px 83px 100px; padding-left: 3px; }
.g .lnk { line-height: 10px; }
.gh { height: 40px; padding-top: 4px; border-bottom: 1px solid #ddd; letter-spacing: -.05px; }
.g1 { height: 39px; padding-top: 5px; }
.g2 { height: 38px; padding-top: 4px; }
.g3 { padding-top: 5px; }
.g1 div, .g2 div, .g3 div { display: flex; gap: 12px; padding-left: 7px; }
.g1 svg, .g2 svg { margin-top: 7px; width: 14px; }
.g3 svg { margin-top: 1px; width: 14px; }
.g .up { position: relative; top: -4px; }
.scroll { width: 12px; height: 640px; margin-top: -8px; border-left: 1px solid #e4e4e4; padding: 3px 0 0 3px; flex: none; }
.scroll span { display: block; width: 8px; height: 114px; border-radius: 4px; background: #c2c2c2; }
.chat { position: absolute; z-index: 6; left: 1045px; top: 639px; width: 186px; height: 30px; border-radius: 5px; background: #2864f5; color: #fff; font: 14.600px/28px "Open Sans", sans-serif; text-align: center; -webkit-text-stroke: .3px #fff; }
```
